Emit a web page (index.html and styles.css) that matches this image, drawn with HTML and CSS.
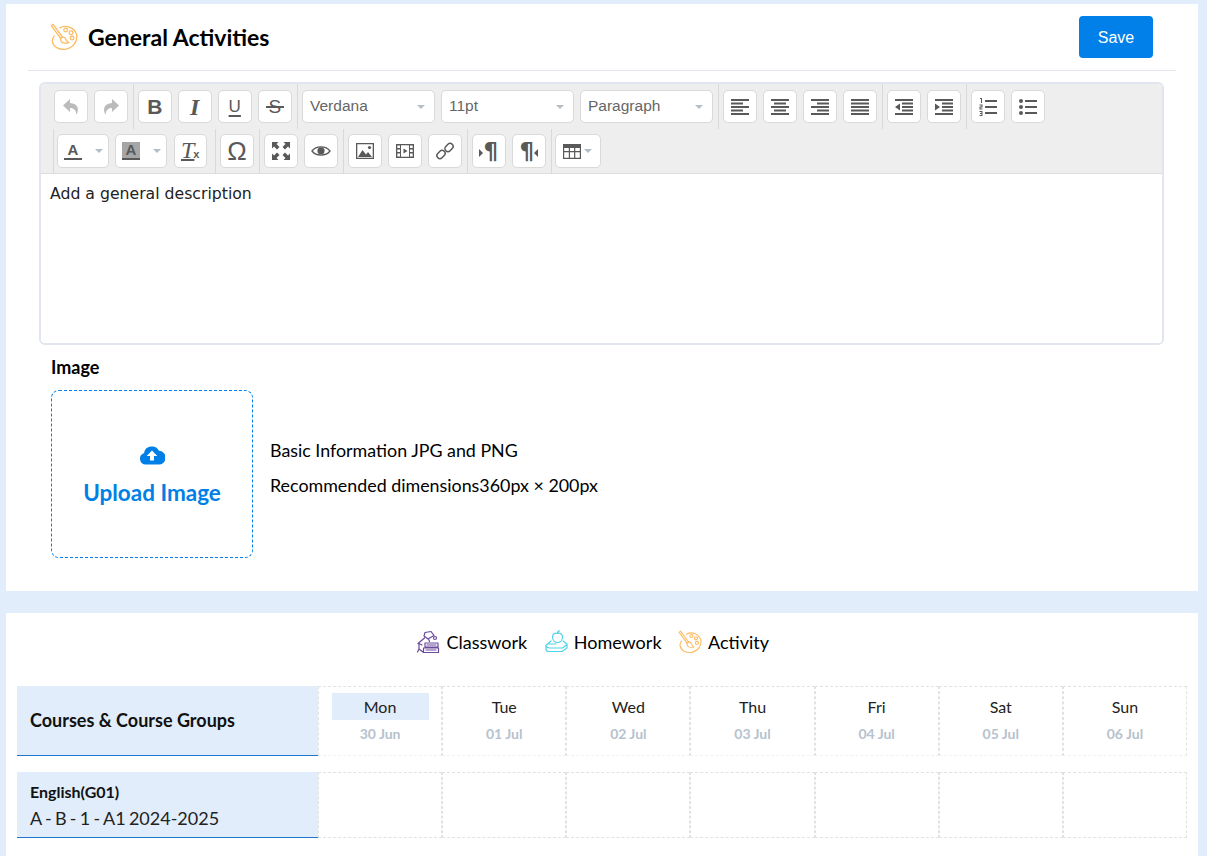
FILE: index.html
```html
<!DOCTYPE html>
<html lang="en">
<head>
<meta charset="utf-8">
<title>General Activities</title>
<link rel="stylesheet" href="styles.css">
</head>
<body>
<section class="card card-top">
  <header class="head">
    <div class="head-title">
      <svg class="palette-lg" viewBox="0 0 26 26"><use href="#palette"/></svg>
      <h1>General Activities</h1>
    </div>
    <button class="save">Save</button>
  </header>

  <div class="editor">
    <div class="toolbar">
      <div class="tb-row tb-row-1">
        <div class="grp grp-first">
          <span class="btn dim"><svg viewBox="0 0 20 20"><path d="M9 2 2 8.500 9 15v-4c4 0 6 2 6.500 7 3-6 1.500-11.500-6.500-12z"/></svg></span>
          <span class="btn dim"><svg viewBox="0 0 20 20"><path d="M11 2l7 6.500L11 15v-4c-4 0-6 2-6.500 7-3-6-1.500-11.500 6.500-12z"/></svg></span>
        </div>
        <div class="grp">
          <span class="btn glyph bold">B</span>
          <span class="btn glyph ital">I</span>
          <span class="btn glyph under">U</span>
          <span class="btn glyph strike">S</span>
        </div>
        <div class="grp grp-sels">
          <span class="sel">Verdana<i class="caret"></i></span>
          <span class="sel">11pt<i class="caret"></i></span>
          <span class="sel">Paragraph<i class="caret"></i></span>
        </div>
        <div class="grp">
          <span class="btn"><svg viewBox="0 0 20 20"><path d="M1 2h18v2H1zM1 5.500h12v2H1zM1 9h18v2H1zM1 12.500h12v2H1zM1 16h18v2H1z"/></svg></span>
          <span class="btn"><svg viewBox="0 0 20 20"><path d="M1 2h18v2H1zM4 5.500h12v2H4zM1 9h18v2H1zM4 12.500h12v2H4zM1 16h18v2H1z"/></svg></span>
          <span class="btn"><svg viewBox="0 0 20 20"><path d="M1 2h18v2H1zM7 5.500h12v2H7zM1 9h18v2H1zM7 12.500h12v2H7zM1 16h18v2H1z"/></svg></span>
          <span class="btn"><svg viewBox="0 0 20 20"><path d="M1 2h18v2H1zM1 5.500h18v2H1zM1 9h18v2H1zM1 12.500h18v2H1zM1 16h18v2H1z"/></svg></span>
        </div>
        <div class="grp">
          <span class="btn"><svg viewBox="0 0 20 20"><path d="M1 2h18v2H1zM8 5.500h11v2H8zM8 9h11v2H8zM8 12.500h11v2H8zM1 16h18v2H1zM6 6.500v7L1 10z"/></svg></span>
          <span class="btn"><svg viewBox="0 0 20 20"><path d="M1 2h18v2H1zM8 5.500h11v2H8zM8 9h11v2H8zM8 12.500h11v2H8zM1 16h18v2H1zM1 6.500v7L6 10z"/></svg></span>
        </div>
        <div class="grp">
          <span class="btn"><svg viewBox="0 0 20 20"><path d="M7 3h12v2H7zM7 9h12v2H7zM7 15h12v2H7zM2 1h2v5H3V2H2zM1.500 7.500h3v3h-2v1h2v1h-3v-3h2v-1h-2zM1.500 14h3v5h-3v-1h2v-1h-1.500v-1h1.500v-1h-2z"/></svg></span>
          <span class="btn"><svg viewBox="0 0 20 20"><path d="M7 3h12v2H7zM7 9h12v2H7zM7 15h12v2H7z"/><circle cx="3" cy="4" r="2"/><circle cx="3" cy="10" r="2"/><circle cx="3" cy="16" r="2"/></svg></span>
        </div>
      </div>
      <div class="tb-row tb-row-2">
        <div class="grp grp-line">
          <span class="btn split"><span class="color-a">A</span><i class="caret"></i></span>
          <span class="btn split"><span class="color-a fill">A</span><i class="caret"></i></span>
          <span class="btn clear-f"><span class="tx">T</span><span class="x">x</span></span>
        </div>
        <div class="grp">
          <span class="btn w34 glyph omega">Ω</span>
        </div>
        <div class="grp">
          <span class="btn"><svg viewBox="0 0 20 20"><path d="M1 1h6.500L5.500 3l3 3-2.500 2.500-3-3L1 7.500zM19 1v6.500l-2-2-3 3L11.500 6l3-3-2-2zM1 19v-6.500l2 2 3-3L8.500 14l-3 3 2 2zM19 19h-6.500l2-2-3-3 2.500-2.500 3 3 2-2z"/></svg></span>
          <span class="btn w34"><svg viewBox="0 0 20 20"><path class="eye-line" d="M1 10C5 4.500 15 4.500 19 10 15 15.500 5 15.500 1 10z"/><circle cx="10" cy="9.800" r="3.600"/></svg></span>
        </div>
        <div class="grp">
          <span class="btn"><svg viewBox="0 0 20 20"><path fill-rule="evenodd" d="M1 2h18v16H1zm1.300 1.300v13.400h15.400V3.300z"/><path d="M3 16l4.500-7 3.500 4.500 2-2.500 4 5z"/><circle cx="14.500" cy="6.500" r="1.600"/></svg></span>
          <span class="btn"><svg viewBox="0 0 20 20"><path fill-rule="evenodd" d="M1 3h18v14H1zm5 1.300v11.400h8V4.300zM2.300 4.500V7H5V4.500zm0 4V11H5V8.500zm0 4V15.500H5V12.500zM15 4.500V7h2.700V4.500zm0 4V11h2.700V8.500zm0 4V15.500h2.700V12.500z"/><path d="M8.500 7.500v5L12.500 10z"/></svg></span>
          <span class="btn w34"><svg viewBox="0 0 20 20"><g fill="none" stroke="#595959" stroke-width="1.500"><rect x="1.500" y="10.500" width="9" height="6" rx="3" transform="rotate(-45 6 13.500)"/><rect x="9.500" y="3.500" width="9" height="6" rx="3" transform="rotate(-45 14 6.500)"/></g></svg></span>
        </div>
        <div class="grp">
          <span class="btn para"><i class="tri tri-r"></i><span>¶</span></span>
          <span class="btn para"><span>¶</span><i class="tri tri-l"></i></span>
        </div>
        <div class="grp grp-last">
          <span class="btn w46"><svg viewBox="0 0 20 20"><path fill-rule="evenodd" d="M1 3h18v15H1zm1.200 4v3h4.600V7zm5.800 0v3h4.100V7zm5.300 0v3h4.500V7zM2.200 11.200v5.600h4.600v-5.600zm5.800 0v5.600h4.100v-5.600zm5.300 0v5.600h4.500v-5.600z"/></svg><i class="caret caret-sm"></i></span>
        </div>
      </div>
    </div>
    <div class="editor-body">Add a general description</div>
  </div>

  <div class="image-field">
    <h2>Image</h2>
    <div class="image-row">
      <div class="upload">
        <svg class="cloud" viewBox="0 0 26 20"><path fill-rule="evenodd" d="M7 19.500a5.800 5.800 0 0 1-2-11.300A8 8 0 0 1 20 5.800a6.800 6.800 0 0 1-.5 13.700zM13 5.500l-5.300 5.600h3.300v4.400h4v-4.400h3.300z"/></svg>
        <span>Upload Image</span>
      </div>
      <div class="hints">
        <p>Basic Information JPG and PNG</p>
        <p>Recommended dimensions360px × 200px</p>
      </div>
    </div>
  </div>
</section>

<section class="card card-bottom">
  <div class="legend">
    <div class="legend-item">
      <svg class="lg-icon classwork" viewBox="0 0 24 24"><path d="M2 13.500 8.500 8M6 15l-3-1.500M3 14v5l-1.500 3M3 19l4 3M9 2.500l6-1 3 4-6 3.500-4-3zM12.500 9l1 2.500M9 13h13v4H9zM7.500 18h15v4.500h-15zM11 15h9M10 20h10"/><circle cx="19" cy="8" r="1.500"/></svg>
      <span>Classwork</span>
    </div>
    <div class="legend-item">
      <svg class="lg-icon homework" viewBox="0 0 24 24"><path d="M13.500 3.500c2.500-1 5 .5 5 3.500 0 3.500-2.500 5.500-5 5.500S8.500 10.500 8.500 7c0-3 2.500-4.500 5-3.500zM13.500 3.500C13.500 2 14 1 15.500 .8M7 11 2 15.500v3.500c0 1.500 1.500 2.500 3 2.500h13l5-3.500v-4l-4-3M2 16c1 2 2.500 2 4 2h12.500l4.500-3.500M5 14h7"/></svg>
      <span>Homework</span>
    </div>
    <div class="legend-item">
      <svg class="lg-icon-pal" viewBox="0 0 26 26"><use href="#palette"/></svg>
      <span>Activity</span>
    </div>
  </div>

  <div class="sched">
    <div class="sched-side sched-title">Courses &amp; Course Groups</div>
    <div class="day"><span class="day-name on">Mon</span><span class="day-date">30 Jun</span></div>
    <div class="day"><span class="day-name">Tue</span><span class="day-date">01 Jul</span></div>
    <div class="day"><span class="day-name">Wed</span><span class="day-date">02 Jul</span></div>
    <div class="day"><span class="day-name">Thu</span><span class="day-date">03 Jul</span></div>
    <div class="day"><span class="day-name">Fri</span><span class="day-date">04 Jul</span></div>
    <div class="day"><span class="day-name">Sat</span><span class="day-date">05 Jul</span></div>
    <div class="day"><span class="day-name">Sun</span><span class="day-date">06 Jul</span></div>
  </div>

  <div class="sched sched-row">
    <div class="sched-side course">
      <strong>English(G01)</strong>
      <span>A - B - 1 - A1 2024-2025</span>
    </div>
    <div class="slot"></div><div class="slot"></div><div class="slot"></div><div class="slot"></div><div class="slot"></div><div class="slot"></div><div class="slot"></div>
  </div>
</section>

<svg class="defs" width="0" height="0">
  <symbol id="palette" viewBox="0 0 26 26">
    <g fill="none" stroke="#fdbb62" stroke-width="1.200" stroke-linecap="round" stroke-linejoin="round">
      <path d="M9 4.500A11 11 0 0 1 24.800 11c1 6-3.500 12-9.800 13.200C9 25.200 3 22.500 2.200 17c-.3-2 .5-3.500 1.800-5"/>
      <path d="M1.200 2.500 2.800 1.200 11.500 13 9.800 14.300z"/>
      <path d="M9.800 14.300c2-1.700 3.800-1.500 4.500 0 .7 1.600 1.200 3.200 3.200 4-2.500.8-6 .5-7-1-.7-1-1-2-.7-3z"/>
      <circle cx="14.500" cy="6.500" r="1.700"/>
      <circle cx="19.500" cy="9" r="1.700"/>
      <circle cx="20.500" cy="14" r="1.700"/>
    </g>
  </symbol>
</svg>
</body>
</html>
```
FILE: styles.css
```css
* { box-sizing: border-box; }
html, body { height: 100%; margin: 0; }
body {
  height: 856px;
  overflow: hidden;
  background: #e1edfa;
  padding: 4px 9px 0 6px;
  display: flex;
  flex-direction: column;
  gap: 22px;
  font-family: Lato, "Noto Sans", sans-serif;
  color: #000;
}
.defs { position: absolute; }
.card { background: #fff; }
.card-top { height: 587px; flex: none; }
.card-bottom { flex: 1; min-height: 0; }

.head {
  height: 67px;
  margin: 0 22px;
  padding: 0 23px 0 22px;
  display: flex;
  align-items: center;
  justify-content: space-between;
  border-bottom: 1px solid #e4e8ee;
}
.head-title { display: flex; align-items: center; gap: 10px; }
.palette-lg { width: 28px; height: 28px; }
.head h1 { margin: 0; font-size: 23px; font-weight: 700; line-height: 30px; }
.save {
  width: 74px;
  height: 42px;
  margin-top: -1px;
  padding: 2px 0 0;
  border: 0;
  border-radius: 4px;
  background: #0080e8;
  color: #fff;
  font: 16px "Liberation Sans", Arial, sans-serif;
}

.editor {
  margin: 11px 34px 0 33px;
  height: 263px;
  border: 2px solid #e0e5ef;
  border-radius: 6px;
  overflow: hidden;
  display: flex;
  flex-direction: column;
}
.toolbar { background: #eee; border-bottom: 1px solid #ddd; height: 90px; flex: none; }
.tb-row { display: flex; }
.tb-row-1 { height: 45px; padding: 6px 0 0 8px; }
.tb-row-2 { height: 44px; padding: 0 0 0 12px; }
.grp {
  display: flex;
  gap: 6.500px;
  padding: 0 5px 0 4px;
  border-left: 1px solid #d9d9d9;
}
.tb-row-1 .grp { margin-top: -6px; padding-top: 6px; height: 45px; padding-right: 5.500px; }
.tb-row-1 .grp-sels { padding-right: 5px; gap: 7px; }
.tb-row-2 .grp { padding-top: 5px; height: 44px; }
.grp-first { border-left-color: transparent; }
.tb-row-2 .grp-line { padding-left: 3px; padding-right: 8px; }
.tb-row-2 .grp-last { padding-left: 3.500px; }

.btn {
  width: 33.500px;
  height: 33px;
  flex: none;
  display: flex;
  align-items: center;
  justify-content: center;
  background: #fff;
  border: 1px solid #d9d9d9;
  border-radius: 5px;
  color: #595959;
}
.tb-row-2 .btn { height: 34px; }
.btn svg { width: 20px; height: 20px; fill: #595959; flex: none; }
.btn.dim svg { fill: #bbb; }
.eye-line { fill: none; stroke: #595959; stroke-width: 1.300; }
.w34 { width: 34px; }
.w46 { width: 46px; gap: 2px; justify-content: flex-start; padding-left: 6px; }
.glyph { font-family: "Liberation Sans", Arial, sans-serif; font-size: 22px; line-height: 1; }
.bold { font-weight: 700; font-size: 21px; }
.ital { font: italic 700 24px/1 "Liberation Serif", serif; }
.under {
  font-size: 17px;
  text-decoration: underline;
  text-decoration-thickness: 2px;
  text-underline-offset: 3px;
}
.strike { position: relative; font-size: 19px; }
.strike::after {
  content: "";
  position: absolute;
  left: 7px;
  right: 7px;
  top: 15px;
  height: 1.500px;
  background: #595959;
}
.omega { font-size: 26px; }

.sel {
  width: 133px;
  height: 33px;
  flex: none;
  position: relative;
  display: flex;
  align-items: center;
  padding: 0 0 2px 7px;
  background: #fff;
  border: 1px solid #d9d9d9;
  border-radius: 5px;
  color: #666;
  font: 15.500px "Liberation Sans", Arial, sans-serif;
}
.grp .sel + .sel { margin-left: -1px; }
.caret {
  width: 0;
  height: 0;
  border: 4.500px solid transparent;
  border-top: 4.500px solid #b5bdc5;
  border-bottom: 0;
}
.sel .caret { position: absolute; right: 9px; top: 14px; }
.caret-sm { border-width: 4px 4px 0; }

.split { width: 52px; justify-content: flex-start; padding-left: 6px; gap: 13px; }
.grp-line .split + .split { margin-left: -.500px; }
.color-a {
  width: 18px;
  height: 18px;
  display: block;
  text-align: center;
  border-bottom: 2px solid #595959;
  font: 700 15px/16px "Liberation Sans", Arial, sans-serif;
}
.color-a.fill { background: #a6a6a6; }
.clear-f { font-family: "Liberation Serif", serif; padding-bottom: 2px; }
.tx { font-size: 24px; font-style: italic; line-height: 22px; text-decoration: underline; text-decoration-thickness: 2px; text-underline-offset: 1px; }
.x { font: 700 11px/1 "Liberation Sans", Arial, sans-serif; margin: 9px 0 0 -1px; }
.para { gap: 0; font: 700 23px/1 "DejaVu Sans", sans-serif; }
.tri { width: 0; height: 0; border: 4px solid transparent; margin-top: 3px; }
.tri-r { border-left: 4px solid #595959; border-right: 0; }
.tri-l { border-right: 4px solid #595959; border-left: 0; }

.editor-body {
  flex: 1;
  padding: 10px 9px;
  background: #fff;
  font: 15.700px/20px "DejaVu Sans", Verdana, sans-serif;
  color: #222;
}

.image-field { margin: 10px 0 0 45px; }
.image-field h2 { margin: 0; font-size: 18px; font-weight: 700; line-height: 24px; }
.image-row { display: flex; align-items: flex-start; gap: 17px; margin-top: 11px; }
.upload {
  width: 202px;
  height: 168px;
  border: 1px dashed #0080e8;
  border-radius: 8px;
  display: flex;
  flex-direction: column;
  align-items: center;
  justify-content: center;
  gap: 13px;
  color: #0080e6;
  font-size: 22.500px;
  font-weight: 700;
  line-height: 30px;
  padding-top: 5px;
}
.cloud { width: 26px; height: 20px; fill: #0080e6; }
.hints { padding-top: 49px; }
.hints p { margin: 0 0 13px; font-size: 17.850px; line-height: 22px; }
.hints p:last-child { margin-bottom: 0; }

.legend {
  height: 73px;
  display: flex;
  align-items: center;
  justify-content: center;
  padding: 0 2px 16px 0;
  font-size: 18px;
}
.legend-item { display: flex; align-items: center; gap: 6px; margin-right: 16.500px; }
.lg-icon { width: 24px; height: 24px; fill: none; stroke-width: 1.200; stroke-linecap: round; stroke-linejoin: round; }
.lg-icon-pal { width: 24px; height: 24px; }
.classwork { stroke: #6a4a9c; }
.homework { stroke: #4fd3e6; }

.sched {
  display: grid;
  grid-template-columns: 301px repeat(7, 1fr);
  margin: 0 11px;
  height: 70px;
}
.sched-row { height: 66px; margin-top: 16px; }
.sched-side {
  background: #e1edfa;
  border-bottom: 1px solid #1a78cf;
  padding-left: 13px;
  display: flex;
  flex-direction: column;
  justify-content: center;
}
.sched-title { font-size: 18px; font-weight: 700; color: #111; padding-bottom: 2px; }
.course strong { font-size: 16px; line-height: 20px; color: #111; }
.course span { font-size: 18px; line-height: 24px; margin-top: 4px; color: #222; word-spacing: -1.300px; }
.course { padding-top: 2px; }
.day, .slot {
  border: 1px dashed #e2e2e2;
}
.day { border-bottom-color: #eef1f8; display: flex; flex-direction: column; align-items: center; padding-top: 6px; }
.day-name {
  width: 97px;
  height: 27px;
  text-align: center;
  font-size: 16px;
  line-height: 28px;
  color: #222;
}
.day-name.on { background: #e1edfa; }
.day-date { margin-top: 5px; font-size: 14px; font-weight: 700; line-height: 18px; color: #b6c2ce; }
```
